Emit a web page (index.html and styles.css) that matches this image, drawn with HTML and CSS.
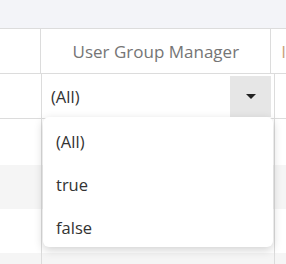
FILE: index.html
```
<!DOCTYPE html>
<html lang="en">
<head>
  <meta charset="UTF-8" />
  <title>Grid filter</title>
  <link rel="stylesheet" href="styles.css">
</head>
<body>
  <div class="toolbar"></div>

  <div class="grid">
    <!-- header row -->
    <div class="row head">
      <div class="cell first"></div>
      <div class="cell main">User Group Manager</div>
      <div class="cell last">I</div>
    </div>

    <!-- filter row -->
    <div class="row filter">
      <div class="cell first"></div>
      <div class="cell main">
        <span class="value">(All)</span>
        <span class="drop-btn"><span class="caret"></span></span>
      </div>
      <div class="cell last"></div>
    </div>

    <div class="row data tall">
      <div class="cell first"></div><div class="cell main"></div><div class="cell last"></div>
    </div>
    <div class="row data alt">
      <div class="cell first"></div><div class="cell main"></div><div class="cell last"></div>
    </div>
    <div class="row data">
      <div class="cell first"></div><div class="cell main"></div><div class="cell last"></div>
    </div>
    <div class="row data alt short">
      <div class="cell first"></div><div class="cell main"></div><div class="cell last"></div>
    </div>

    <!-- popup list -->
    <ul class="popup">
      <li>(All)</li>
      <li>true</li>
      <li>false</li>
    </ul>
  </div>
</body>
</html>
```

FILE: styles.css
```
body {
  margin: 0;
  font-family: 'Open Sans', 'Noto Sans', sans-serif;
  color: #333;
  background: #fff;
  overflow: hidden;
}
.toolbar {
  height: 28px;
  background-color: #f3f4f8;
  border-bottom: 1px solid #dcdcdc;
}
.grid {
  position: relative;
}
.row {
  display: flex;
}
.cell {
  box-sizing: border-box;
  border-right: 1px solid #dcdcdc;
}
.first {
  width: 42px;
}
.main {
  width: 233px;
}
.last {
  flex: 1;
  border-right: none;
}
.head {
  height: 44px;
  border-bottom: 1px solid #dcdcdc;
}
.head .cell {
  display: flex;
  align-items: center;
  justify-content: center;
  color: #757575;
  font-size: 17px;
}
.head .last {
  justify-content: flex-start;
  padding-left: 10px;
  color: #c9a27e;
}
.filter {
  height: 44px;
  border-bottom: 1px solid #dcdcdc;
}
.filter .main {
  display: flex;
  align-items: center;
  justify-content: space-between;
  padding: 1px 3px 1px 9px;
}
.value {
  font-size: 16.5px;
  color: #333;
}
.drop-btn {
  width: 41px;
  height: 41px;
  background-color: #e6e6e6;
  display: flex;
  align-items: center;
  justify-content: center;
}
.caret {
  width: 0;
  height: 0;
  border-left: 5px solid transparent;
  border-right: 5px solid transparent;
  border-top: 5px solid #222;
}
.data {
  height: 44px;
}
.data.tall {
  height: 46px;
}
.data.short {
  height: 13px;
}
.data.alt {
  background-color: #f5f5f5;
}
.popup {
  position: absolute;
  left: 43px;
  top: 88px;
  width: 230px;
  height: 130px;
  margin: 0;
  padding: 3px 0 0;
  list-style: none;
  background: #fff;
  border-radius: 6px;
  box-shadow: 0 3px 10px rgb(0 0 0 / 0.18);
  box-sizing: border-box;
}
.popup li {
  height: 43px;
  line-height: 43px;
  padding-left: 13px;
  font-size: 16.5px;
  color: #333;
}
```
